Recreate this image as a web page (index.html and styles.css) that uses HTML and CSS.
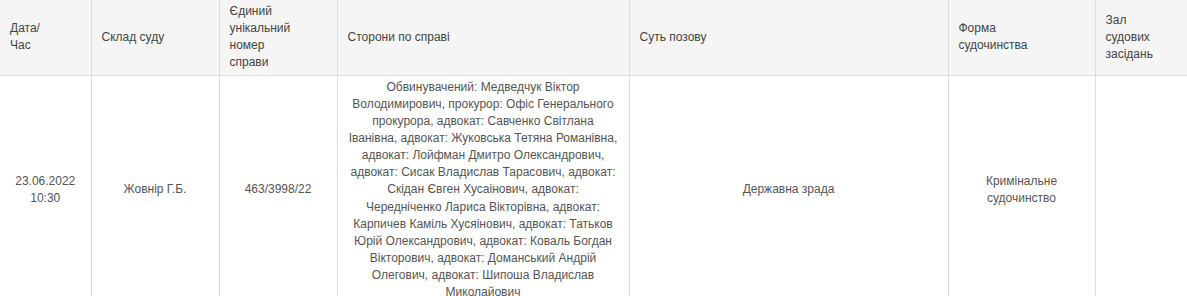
FILE: index.html
```html
<!DOCTYPE html>
<html lang="uk">
<head>
<meta charset="utf-8">
<title>Розклад засідань</title>
<link rel="stylesheet" href="styles.css">
</head>
<body>
<table class="schedule">
  <colgroup>
    <col class="c-date">
    <col class="c-judge">
    <col class="c-num">
    <col class="c-parties">
    <col class="c-essence">
    <col class="c-form">
    <col class="c-hall">
  </colgroup>
  <thead>
    <tr>
      <th>Дата/<br>Час</th>
      <th>Склад суду</th>
      <th>Єдиний<br>унікальний<br>номер<br>справи</th>
      <th>Сторони по справі</th>
      <th>Суть позову</th>
      <th>Форма<br>судочинства</th>
      <th>Зал<br>судових<br>засідань</th>
    </tr>
  </thead>
  <tbody>
    <tr>
      <td>23.06.2022<br>10:30</td>
      <td>Жовнір Г.Б.</td>
      <td>463/3998/22</td>
      <td class="parties">Обвинувачений: Медведчук Віктор<br>Володимирович, прокурор: Офіс Генерального<br>прокурора, адвокат: Савченко Світлана<br>Іванівна, адвокат: Жуковська Тетяна Романівна,<br>адвокат: Лойфман Дмитро Олександрович,<br>адвокат: Сисак Владислав Тарасович, адвокат:<br>Скідан Євген Хусаінович, адвокат:<br>Чередніченко Лариса Вікторівна, адвокат:<br>Карпичев Каміль Хусяінович, адвокат: Татьков<br>Юрій Олександрович, адвокат: Коваль Богдан<br>Вікторович, адвокат: Доманський Андрій<br>Олегович, адвокат: Шипоша Владислав<br>Миколайович</td>
      <td>Державна зрада</td>
      <td>Кримінальне<br>судочинство</td>
      <td></td>
    </tr>
  </tbody>
</table>
</body>
</html>
```

FILE: styles.css
```css
html, body {
  margin: 0;
  padding: 0;
  background: #ffffff;
}

body {
  font-family: "Liberation Sans", Arial, Helvetica, sans-serif;
  font-size: 12px;
  line-height: 1.42857;
  color: #555555;
  overflow: hidden;
}

.schedule {
  width: 1187px;
  table-layout: fixed;
  border-collapse: collapse;
}

.c-date { width: 91px; }
.c-judge { width: 128px; }
.c-num { width: 118px; }
.c-parties { width: 292px; }
.c-essence { width: 319px; }
.c-form { width: 147px; }
.c-hall { width: 92px; }

.schedule th,
.schedule td {
  border: 1px solid #dddddd;
  padding: 3px 10px;
  vertical-align: middle;
}

.schedule tr > :first-child {
  border-left: none;
}

.schedule tr > :last-child {
  border-right: none;
}

.schedule thead tr > * {
  border-top: none;
}

.schedule th {
  background: #f5f5f5;
  color: #444444;
  font-weight: normal;
  text-align: left;
}

.schedule td {
  text-align: center;
  color: #555555;
}

.schedule td.parties {
  padding-left: 6px;
  padding-right: 6px;
  white-space: nowrap;
}
```
